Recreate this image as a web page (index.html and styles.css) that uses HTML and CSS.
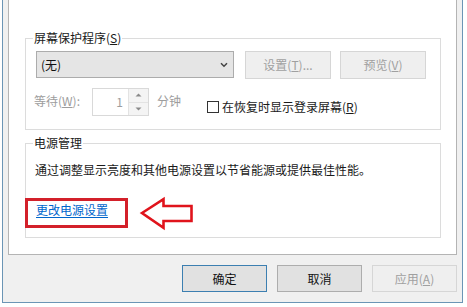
FILE: index.html
```html
<!DOCTYPE html>
<html lang="zh-CN">
<head>
<meta charset="utf-8">
<title>屏幕保护程序设置</title>
<link rel="stylesheet" href="styles.css">
</head>
<body>
<div class="window">
  <div class="panel">
    <fieldset class="group group-saver">
      <legend>屏幕保护程序(<u>S</u>)</legend>
      <div class="row row-select">
        <div class="select">
          <span>(无)</span>
          <svg class="chev" width="8" height="6" viewBox="0 0 8 6"><path d="M1 1.2 L4 4.2 L7 1.2" fill="none" stroke="#444" stroke-width="1.5"/></svg>
        </div>
        <div class="btn btn-disabled btn-set">设置(<u>T</u>)...</div>
        <div class="btn btn-disabled btn-preview">预览(<u>V</u>)</div>
      </div>
      <div class="row row-wait">
        <span class="wait-label">等待(<u>W</u>):</span>
        <div class="spin">
          <span class="spin-value">1</span>
          <div class="spin-btns">
            <div class="spin-btn"><svg width="7" height="4" viewBox="0 0 7 4"><path d="M0.5 3.5 L3.5 0.5 L6.5 3.5 Z" fill="#8a8a8a"/></svg></div>
            <div class="spin-btn"><svg width="7" height="4" viewBox="0 0 7 4"><path d="M0.5 0.5 L3.5 3.5 L6.5 0.5 Z" fill="#8a8a8a"/></svg></div>
          </div>
        </div>
        <span class="minutes">分钟</span>
        <label class="check">
          <span class="box"></span>
          <span>在恢复时显示登录屏幕(<u>R</u>)</span>
        </label>
      </div>
    </fieldset>
    <fieldset class="group group-power">
      <legend>电源管理</legend>
      <p class="desc">通过调整显示亮度和其他电源设置以节省能源或提供最佳性能。</p>
      <a class="link" href="#">更改电源设置</a>
    </fieldset>
    <div class="mark-box"></div>
    <svg class="mark-arrow" width="58" height="38" viewBox="0 0 58 38">
      <path d="M4 17 L25.5 3.2 L25.5 10 L53.5 10 L53.5 25 L25.5 25 L25.5 31.8 Z" fill="none" stroke="#e0141c" stroke-width="2.6" stroke-linejoin="miter"/>
    </svg>
  </div>
  <div class="footer">
    <div class="btn btn-default">确定</div>
    <div class="btn">取消</div>
    <div class="btn btn-disabled">应用(<u>A</u>)</div>
  </div>
</div>
</body>
</html>
```
FILE: styles.css
```css
html, body {
  margin: 0;
  padding: 0;
  background: #ffffff;
}
body {
  font-family: "Noto Sans CJK SC", "Noto Sans", sans-serif;
  font-size: 12px;
  line-height: 14px;
  color: #1a1a1a;
}
u {
  text-decoration: underline;
  text-underline-offset: 1px;
}
.window {
  margin-left: 2px;
  width: 449px;
  height: 302px;
  padding: 0 5px;
  background: #f0f0f0;
  border-left: 1px solid #6b95b5;
  border-right: 1px solid #6b95b5;
  border-bottom: 1px solid #6b95b5;
}
.panel {
  position: relative;
  height: 254px;
  background: #ffffff;
  border-left: 1px solid #b4b4b4;
  border-right: 1px solid #b4b4b4;
  border-bottom: 1px solid #b4b4b4;
  padding: 0 15px 0 16px;
  box-sizing: border-box;
  height: 255px;
  overflow: hidden;
}
.group {
  margin: 0;
  border: 1px solid #dcdcdc;
  min-inline-size: 0;
}
.group legend {
  padding: 0 1px;
  margin-left: -3px;
  line-height: 14px;
  color: #1a1a1a;
}
.group-saver {
  margin-top: 31px;
  padding: 6px 0 13px 10px;
}
.group-power {
  margin-top: 6px;
  padding: 13px 0 20px 10px;
}
.row {
  display: flex;
  align-items: center;
}
.row-select {
  height: 27px;
}
.select {
  box-sizing: border-box;
  width: 198px;
  height: 27px;
  background: #e5e5e5;
  border: 1px solid #acacac;
  display: flex;
  align-items: center;
  justify-content: space-between;
  padding: 0 4px 0 4px;
  color: #111;
}
.chev {
  display: block;
  margin-right: 1px;
}
.btn {
  box-sizing: border-box;
  height: 27px;
  width: 85px;
  display: flex;
  align-items: center;
  justify-content: center;
  background: #e1e1e1;
  border: 1px solid #adadad;
  color: #111;
}
.btn-disabled {
  background: #efefef;
  border-color: #d6d6d6;
  color: #a0a0a0;
}
.btn-default {
  border-color: #3c7fb1;
}
.btn-set {
  margin-left: 11px;
  width: 86px;
  height: 28px;
}
.btn-preview {
  margin-left: 9px;
  width: 86px;
  height: 28px;
}
.row-wait {
  margin-top: 10px;
  height: 28px;
  color: #9d9d9d;
}
.wait-label {
  margin-left: -2px;
  width: 58px;
  margin-top: -3px;
}
.spin {
  box-sizing: border-box;
  width: 57px;
  height: 28px;
  border: 1px solid #d9d9d9;
  display: flex;
  align-items: stretch;
  background: #fff;
}
.spin-value {
  flex: 1;
  text-align: right;
  padding-right: 5px;
  display: flex;
  align-items: center;
  justify-content: flex-end;
  color: #9d9d9d;
}
.spin-btns {
  width: 19px;
  display: flex;
  flex-direction: column;
  border-left: 1px solid #e3e3e3;
}
.spin-btn {
  flex: 1;
  display: flex;
  align-items: center;
  justify-content: center;
  background: #f4f4f4;
}
.spin-btn + .spin-btn {
  border-top: 1px solid #e3e3e3;
}
.spin-btn svg {
  display: block;
}
.minutes {
  margin-left: 8px;
  margin-top: -3px;
}
.check {
  margin-left: 26px;
  margin-top: 10px;
  display: flex;
  align-items: center;
  color: #1a1a1a;
}
.box {
  box-sizing: border-box;
  width: 12px;
  height: 12px;
  border: 1px solid #333;
  background: #fff;
  margin-right: 3px;
}
.desc {
  margin: 0 0 0 -1px;
  line-height: 14px;
  color: #1a1a1a;
}
.link {
  display: inline-block;
  margin-top: 26px;
  color: #0066cc;
  text-decoration: underline;
  text-underline-offset: 2px;
}
.mark-box {
  position: absolute;
  left: 16px;
  top: 198px;
  width: 103px;
  height: 30px;
  box-sizing: border-box;
  border: 3px solid #d3202a;
}
.mark-arrow {
  position: absolute;
  left: 129px;
  top: 196px;
}
.footer {
  display: flex;
  justify-content: flex-end;
  gap: 10px;
  margin-top: 10px;
}
```
